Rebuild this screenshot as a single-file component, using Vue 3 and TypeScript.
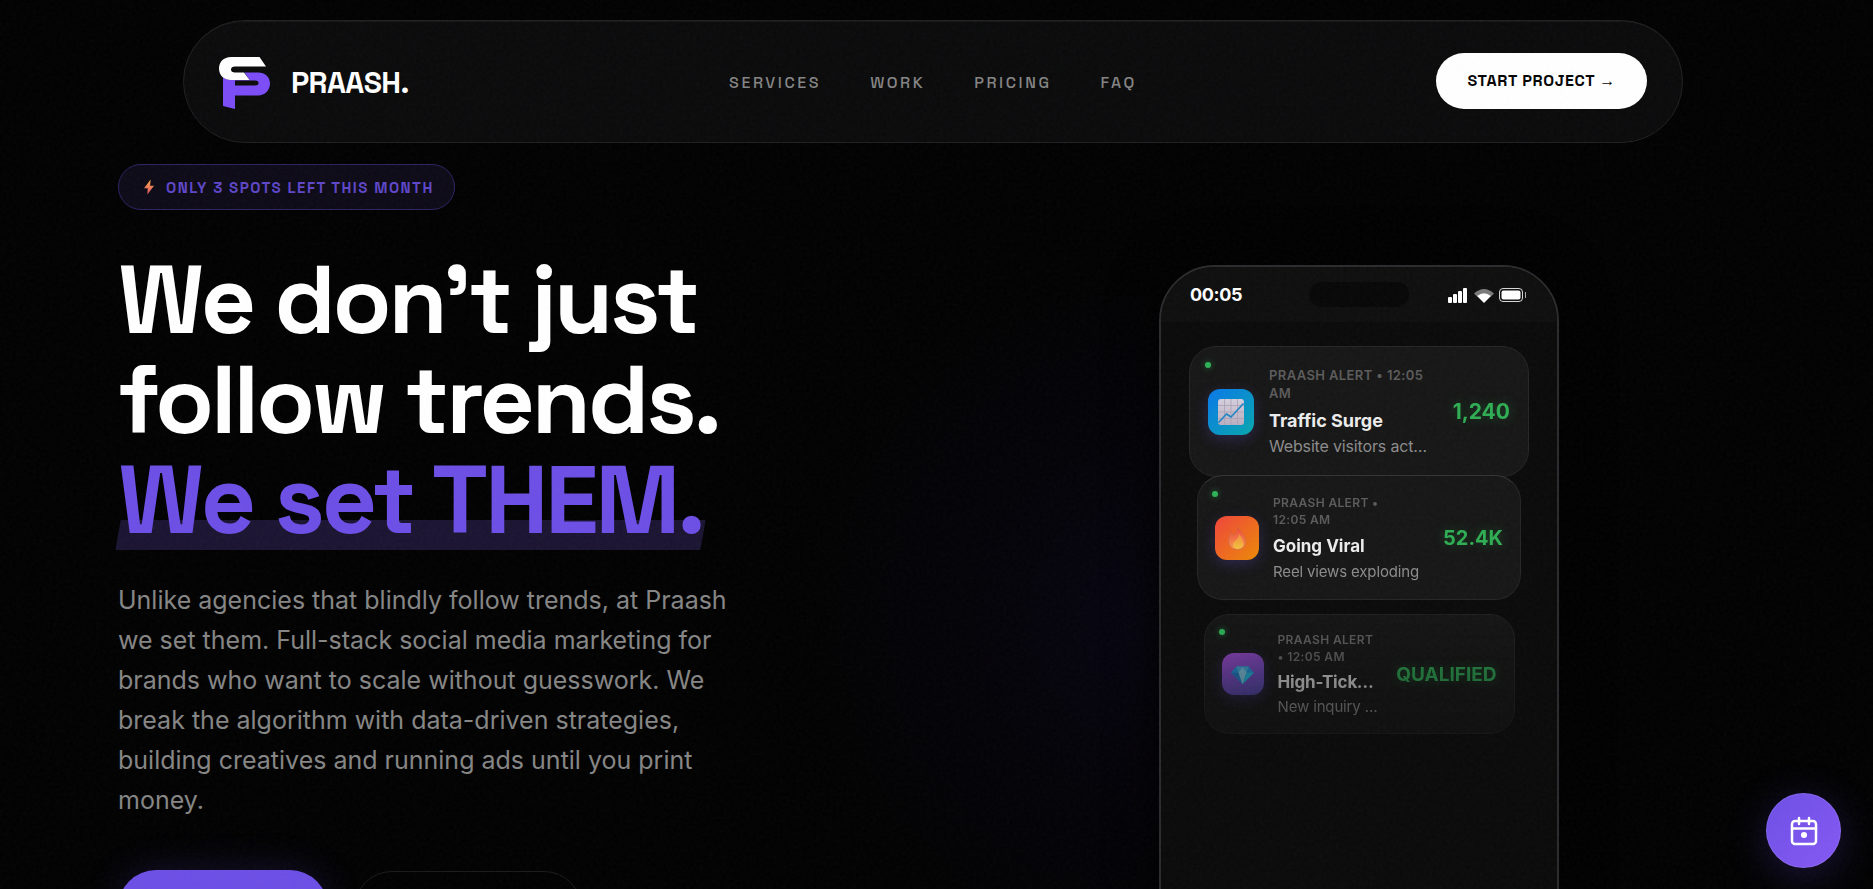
<script setup lang="ts">
type AlertKind = 'chart' | 'fire' | 'gem'

interface AlertItem {
  kind: AlertKind
  meta: string
  title: string
  detail: string
  value: string
}

const links: string[] = ['SERVICES', 'WORK', 'PRICING', 'FAQ']

const alerts: AlertItem[] = [
  { kind: 'chart', meta: 'PRAASH ALERT • 12:05 AM', title: 'Traffic Surge', detail: 'Website visitors active now', value: '1,240' },
  { kind: 'fire', meta: 'PRAASH ALERT • 12:05 AM', title: 'Going Viral', detail: 'Reel views exploding', value: '52.4K' },
  { kind: 'gem', meta: 'PRAASH ALERT • 12:05 AM', title: 'High-Ticket Lead', detail: 'New inquiry received', value: 'QUALIFIED' },
]
</script>

<template>
  <div class="page">
    <header class="nav">
      <a class="brand" href="#">
        <svg class="mark" viewBox="0 0 52 52" aria-hidden="true">
          <path d="M4 20.5 Q8 23 14 23 H30.5 L25.5 15.5 H39 C46 15.5 51 20 51 26.5 S46 38.500 39 38.500 H16 V52 L4 49 Z" fill="#7c4df7" />
          <path d="M16 28.500 H36 Q39.500 28.500 39.500 26 T36 23.500 H16 Z" fill="#0c0c0d" />
          <path d="M12 0 H40.500 L47 9.500 H16 Q12 9.500 12 12.500 T16 15.500 H25 L30.500 23 H12 C4.500 23 0 18 0 11.500 S4.500 0 12 0 Z" fill="#fff" />
        </svg>
        <span>PRAASH.</span>
      </a>
      <nav class="links" aria-label="Main">
        <a v-for="link in links" :key="link" :href="'#' + link.toLowerCase()">{{ link }}</a>
      </nav>
      <a class="start" href="#contact">START PROJECT <span class="arrow">→</span></a>
    </header>

    <main class="hero">
      <section class="copy">
        <p class="badge">
          <svg viewBox="0 0 12 18" aria-hidden="true">
            <defs>
              <linearGradient id="bolt" x1="0" y1="0" x2="0" y2="1"><stop stop-color="#fbae44" /><stop offset="1" stop-color="#e5506a" /></linearGradient>
            </defs>
            <path d="M8 0 0 10.500h4.500L4 18 12 7.500H7.300Z" fill="url(#bolt)" />
          </svg>
          <span>ONLY 3 SPOTS LEFT THIS MONTH</span>
        </p>
        <h1>We don’t just<br>follow trends.<br><span class="accent">We set THEM.</span></h1>
        <p class="lead">Unlike agencies that blindly follow trends, at Praash we set them. Full-stack social media marketing for brands who want to scale without guesswork. We break the algorithm with data-driven strategies, building creatives and running ads until you print money.</p>
        <div class="actions">
          <button class="primary" type="button" aria-label="Start project"></button>
          <button class="ghost" type="button" aria-label="Work"></button>
        </div>
      </section>

      <section class="stage">
        <div class="phone">
          <div class="status">
            <span class="time">00:05</span>
            <span class="island"></span>
            <svg class="signals" viewBox="0 0 80 16" aria-hidden="true">
              <g fill="#fff">
                <rect x="0" y="10" width="4" height="6" rx="1" />
                <rect x="5" y="7" width="4" height="9" rx="1" />
                <rect x="10" y="4" width="4" height="12" rx="1" />
                <rect x="15" y="1" width="4" height="15" rx="1" />
              </g>
              <path d="M26 6.500Q36 -2.500 46 6.500L43 9.500Q36 4 29 9.500Z" fill="#7b7b7b" />
              <path d="M29 9Q36 3.500 43 9L36 16Z" fill="#fff" />
              <rect x="51.500" y="1.500" width="23" height="13" rx="3.500" fill="none" stroke="#d8d8d8" />
              <rect x="53.500" y="3.500" width="19" height="9" rx="2" fill="#fff" />
              <rect x="77" y="5" width="1" height="6" fill="#aaa" />
            </svg>
          </div>
          <ul class="alerts">
            <li v-for="alert in alerts" :key="alert.kind" :class="['alert', alert.kind]">
              <i class="dot"></i>
              <span class="tile">
                <svg v-if="alert.kind === 'chart'" viewBox="0 0 26 26" aria-hidden="true">
                  <defs>
                    <linearGradient id="paper" x1="0" y1="0" x2="0" y2="1"><stop stop-color="#d6cfdd" /><stop offset="1" stop-color="#b9afc2" /></linearGradient>
                  </defs>
                  <rect width="26" height="26" rx="3" fill="url(#paper)" />
                  <path d="M6.500 0v26M13 0v26M19.500 0v26M0 6.500h26M0 13h26M0 19.500h26" stroke="#aaa1b5" stroke-width=".8" />
                  <path d="M1 23 8.500 15l4.500 3L25 5" fill="none" stroke="#2587c4" stroke-width="1.800" stroke-linecap="round" stroke-linejoin="round" />
                </svg>
                <svg v-else-if="alert.kind === 'fire'" viewBox="0 0 26 26" aria-hidden="true">
                  <defs>
                    <linearGradient id="flame" x1="0" y1="0" x2="0" y2="1"><stop stop-color="#f0453b" /><stop offset="1" stop-color="#f59a50" /></linearGradient>
                    <linearGradient id="core" x1="0" y1="0" x2="0" y2="1"><stop stop-color="#f08b3c" /><stop offset="1" stop-color="#f3c13f" /></linearGradient>
                  </defs>
                  <path d="M14 1C17 7 22.500 10 22.500 17C22.500 22 18.500 25.500 13.500 25.500C8 25.500 4 22 4 16.500C4 12 6 9.500 6.500 6C8 8 8.500 9 9 11C12 8 14 5 14 1Z" fill="url(#flame)" stroke="#c96a43" stroke-width=".6" />
                  <path d="M15 8Q15 13 11 16T9.500 23Q13 26 17 24T19.500 17Q19 13 15 8Z" fill="url(#core)" />
                </svg>
                <svg v-else viewBox="0 0 26 26" aria-hidden="true">
                  <path d="M6 4H20L26 11 13 24 0 11Z" fill="#1f7cba" />
                  <path d="M6 4H20L17.500 11H8.500Z" fill="#3a93b8" />
                  <path d="M0 11H8.500L13 24Z" fill="#2069a9" />
                  <path d="M8.500 11 13 5l4.500 6L13 24Z" fill="#6fa9c0" />
                  <path d="M17.500 11H26L13 24Z" fill="#219fc0" />
                </svg>
              </span>
              <div class="text">
                <small>{{ alert.meta }}</small>
                <strong>{{ alert.title }}</strong>
                <p>{{ alert.detail }}</p>
              </div>
              <b class="value">{{ alert.value }}</b>
            </li>
          </ul>
        </div>
      </section>
    </main>

    <button class="fab" type="button" aria-label="Calendar">
      <svg viewBox="0 0 28 30" aria-hidden="true">
        <rect x="2" y="5" width="24" height="23" rx="3" />
        <path d="M2 12.500h24M9 2v6M19 2v6" />
        <circle cx="14" cy="19" r="1.800" fill="#fff" />
      </svg>
    </button>

    <svg class="grain" aria-hidden="true">
      <filter id="noise"><feTurbulence type="fractalNoise" baseFrequency=".3" numOctaves="2" stitchTiles="stitch" /></filter>
      <rect width="100%" height="100%" filter="url(#noise)" />
    </svg>
  </div>
</template>

<style>
html {
  background: #020202;
  scrollbar-width: none;
}
</style>

<style scoped>
.page {
  --violet: #6d4fe6;
  --display: "Space Grotesk", Inter, "Liberation Sans", sans-serif;
  min-height: 100vh;
  box-sizing: border-box;
  padding: 20px 7px 40px 0;
  color: #fff;
  font-family: Inter, "Liberation Sans", sans-serif;
  background: radial-gradient(ellipse 340px 360px at 61% 620px, #070510 0, #040308 55%, transparent 100%), #020202;
}
a { color: inherit; text-decoration: none; }
button { border: 0; font: inherit; color: inherit; cursor: pointer; }
p, h1, ul { margin: 0; padding: 0; }

.nav {
  box-sizing: border-box;
  width: 90%;
  max-width: 1500px;
  min-height: 123px;
  margin: 0 auto;
  padding: 0 35px 2px;
  display: grid;
  grid-template-columns: 1fr auto 1fr;
  align-items: center;
  border: 1px solid #202021;
  border-radius: 62px;
  background: #0b0b0c;
  box-shadow: inset 0 1px #171718;
  font-family: var(--display);
}
.brand { display: flex; align-items: center; gap: 20px; padding-top: 4px; font-size: 30px; font-weight: 700; letter-spacing: -0.02em; }
.mark { width: 52px; height: 52px; }
.links { display: flex; gap: 49px; padding-top: 4px; font-size: 16px; font-weight: 500; letter-spacing: 0.16em; color: #858585; }
.start {
  justify-self: end;
  display: flex;
  align-items: center;
  gap: 4px;
  height: 56px;
  padding: 0 31px 0 32px;
  border-radius: 28px;
  background: #fff;
  color: #050505;
  font-size: 16px;
  font-weight: 700;
  letter-spacing: 0.04em;
}
.arrow { font-family: "Liberation Serif", serif; font-weight: 400; }

.hero {
  display: grid;
  grid-template-columns: 1fr 1fr;
  gap: 74px;
  padding: 21px 118px 0;
}
.copy { display: flex; flex-direction: column; align-items: flex-start; }
.badge {
  box-sizing: border-box;
  height: 46px;
  display: flex;
  align-items: center;
  gap: 12px;
  padding: 0 20px 0 25px;
  border: 1px solid #2e2463;
  border-radius: 23px;
  background: #0e0b18;
  color: #5f47c9;
  font-family: var(--display);
  font-size: 15px;
  font-weight: 600;
  letter-spacing: 0.1em;
}
.badge svg { width: 10px; height: 16px; }
h1 {
  margin-top: 40px;
  font-family: var(--display);
  font-size: 96px;
  line-height: 100px;
  font-weight: 700;
  letter-spacing: -3px;
  white-space: nowrap;
}
.accent { position: relative; display: inline-block; color: var(--violet); isolation: isolate; }
.accent::after {
  content: "";
  position: absolute;
  inset: auto 0 0;
  height: 30px;
  z-index: -1;
  background: #1b1532;
  transform: skewX(-10deg);
}
.lead { max-width: 625px; margin-top: 30px; font-size: 25px; line-height: 40px; color: #868686; }
.actions { display: flex; align-items: flex-start; gap: 26px; margin-top: 50px; }
.primary { width: 210px; height: 76px; border-radius: 38px; background: var(--violet); box-shadow: 0 0 38px #6d4fe633; }
.ghost { width: 228px; height: 76px; border-radius: 38px; background: transparent; border: 1px solid #1b1b1c; margin-top: 1px; }

.stage { display: flex; justify-content: center; align-items: flex-start; padding-top: 101px; }
.phone {
  box-sizing: border-box;
  width: 400px;
  min-height: 780px;
  border: 2px solid #2b2b2e;
  border-radius: 56px;
  background: #0b0b0b;
  overflow: hidden;
  box-shadow: 0 0 50px #000;
}
.status {
  box-sizing: border-box;
  height: 55px;
  padding: 0 29px;
  display: grid;
  grid-template-columns: 1fr 100px 1fr;
  align-items: center;
  background: #0f0f0f;
}
.time { font-size: 18px; font-weight: 700; letter-spacing: -0.02em; }
.island { height: 25px; border-radius: 13px; background: #080808; }
.signals { width: 80px; height: 16px; justify-self: end; }

.alerts {
  list-style: none;
  display: flex;
  flex-direction: column;
  align-items: center;
  padding-top: 24px;
  mask-image: linear-gradient(#000 72%, #0008 98%);
}
.alert {
  position: relative;
  box-sizing: border-box;
  display: flex;
  align-items: center;
  border: 1px solid #262627;
  background: #171717;
}
.tile { flex: none; display: grid; place-items: center; border-radius: 12px; box-shadow: 0 4px 14px #6d4fe640; }
.dot { position: absolute; width: 6px; height: 6px; border-radius: 50%; background: #2fb257; box-shadow: 0 0 6px #2fb25799; }
.text { flex: 1; min-width: 0; }
.text small { display: block; font-weight: 600; letter-spacing: 0.03em; color: #5c5c5c; }
.text strong, .text p { display: block; overflow: hidden; text-overflow: ellipsis; white-space: nowrap; }
.text strong { font-weight: 700; color: #ececec; margin-top: 5px; }
.text p { color: #8c8c8c; letter-spacing: -0.01em; }
.value { flex: none; font-weight: 700; color: #2fae54; text-shadow: 0 0 12px #2fae5459; }

.chart { width: 340px; height: 131px; padding: 0 18px; gap: 15px; border-radius: 27px; }
.chart .tile { width: 46px; height: 46px; background: linear-gradient(135deg, #0a78ea, #08a8ae); }
.chart .tile svg { width: 26px; height: 26px; }
.chart .dot { left: 15px; top: 15px; }
.chart small { font-size: 13px; line-height: 18px; }
.chart strong { font-size: 18px; line-height: 27px; }
.chart p { padding-right: 4px; font-size: 16px; line-height: 24px; }
.chart .value { font-size: 21px; margin-left: 4px; }

.fire { width: 324px; height: 125px; margin-top: -2px; padding: 0 17px; gap: 14px; border-radius: 26px; border-top-color: #343435; }
.fire .tile { width: 44px; height: 44px; background: linear-gradient(135deg, #f0453b, #ec8a08); }
.fire .tile svg { width: 24px; height: 24px; }
.fire .dot { left: 14px; top: 15px; }
.fire .text { padding-top: 2px; }
.fire small { padding-right: 20px; font-size: 12px; line-height: 17px; }
.fire strong { font-size: 17px; line-height: 27px; }
.fire p { font-size: 15px; line-height: 24px; }
.fire .value { font-size: 20px; }

.gem { width: 311px; height: 120px; margin-top: 14px; padding: 0 17px; gap: 14px; border-radius: 25px; background: #151515; border-color: #202021; }
.gem .tile { width: 42px; height: 42px; background: linear-gradient(160deg, #8840b2, #443f94); }
.gem .tile svg { width: 23px; height: 23px; }
.gem .dot { left: 14px; top: 14px; }
.gem small { font-size: 12px; line-height: 17px; }
.gem strong { font-size: 17px; line-height: 25px; color: #bdbdbd; letter-spacing: -0.01em; }
.gem p { font-size: 15px; line-height: 23px; color: #808080; }
.gem .value { font-size: 19px; margin-left: 3px; color: #29904a; }

.fab {
  position: fixed;
  right: 32px;
  bottom: 21px;
  width: 75px;
  height: 75px;
  padding: 0;
  display: grid;
  place-items: center;
  border-radius: 50%;
  background: linear-gradient(135deg, #6d4fe6, #8659f4);
  box-shadow: 0 8px 40px #6d4fe640, inset 0 0 0 1px #ffffff1a;
}
.fab svg { width: 28px; height: 30px; fill: none; stroke: #fff; stroke-width: 2.500; stroke-linecap: round; }

.grain { position: fixed; inset: 0; width: 100%; height: 100%; opacity: .03; pointer-events: none; }
</style>
